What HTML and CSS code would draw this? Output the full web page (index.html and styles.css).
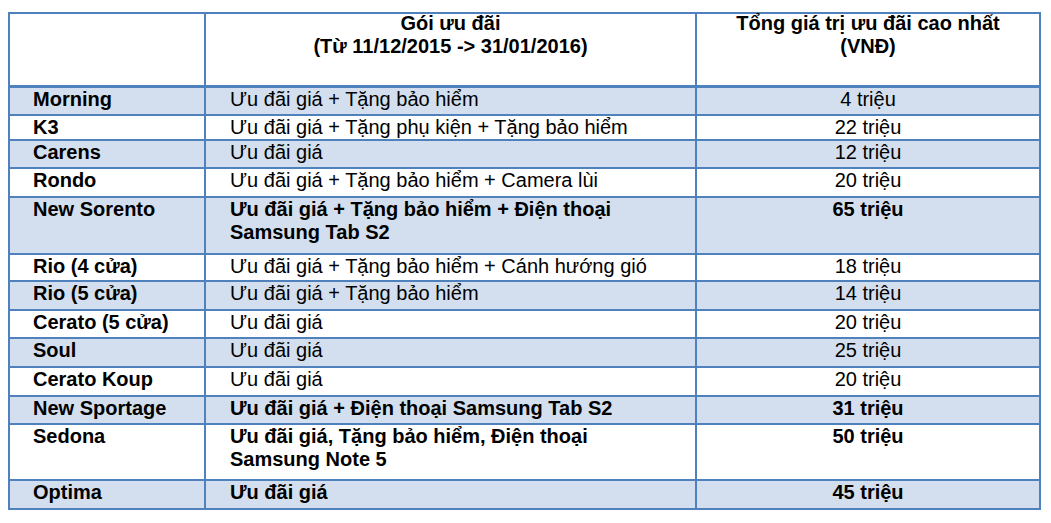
FILE: index.html
```html
<!DOCTYPE html>
<html lang="vi">
<head>
<meta charset="utf-8">
<title>Ưu đãi</title>
<link rel="stylesheet" href="styles.css">
</head>
<body>
<table class="grid">
  <colgroup>
    <col class="c1"><col class="c2"><col class="c3">
  </colgroup>
  <thead>
    <tr class="head">
      <th></th>
      <th><div class="hd">Gói ưu đãi<br>(Từ 11/12/2015 -&gt; 31/01/2016)</div></th>
      <th><div class="hd">Tổng giá trị ưu đãi cao nhất<br>(VNĐ)</div></th>
    </tr>
  </thead>
  <tbody>
    <tr class="alt h28"><td class="name">Morning</td><td class="pkg">Ưu đãi giá + Tặng bảo hiểm</td><td class="val">4 triệu</td></tr>
    <tr class="h25"><td class="name">K3</td><td class="pkg">Ưu đãi giá + Tặng phụ kiện + Tặng bảo hiểm</td><td class="val">22 triệu</td></tr>
    <tr class="alt h28"><td class="name">Carens</td><td class="pkg">Ưu đãi giá</td><td class="val">12 triệu</td></tr>
    <tr class="h29"><td class="name">Rondo</td><td class="pkg">Ưu đãi giá + Tặng bảo hiểm + Camera lùi</td><td class="val">20 triệu</td></tr>
    <tr class="alt h57 strong"><td class="name">New Sorento</td><td class="pkg">Ưu đãi giá + Tặng bảo hiểm + Điện thoại<br>Samsung Tab S2</td><td class="val">65 triệu</td></tr>
    <tr class="h27"><td class="name">Rio (4 cửa)</td><td class="pkg">Ưu đãi giá + Tặng bảo hiểm + Cánh hướng gió</td><td class="val">18 triệu</td></tr>
    <tr class="alt h29"><td class="name">Rio (5 cửa)</td><td class="pkg">Ưu đãi giá + Tặng bảo hiểm</td><td class="val">14 triệu</td></tr>
    <tr class="h28"><td class="name">Cerato (5 cửa)</td><td class="pkg">Ưu đãi giá</td><td class="val">20 triệu</td></tr>
    <tr class="alt h29"><td class="name">Soul</td><td class="pkg">Ưu đãi giá</td><td class="val">25 triệu</td></tr>
    <tr class="h29"><td class="name">Cerato Koup</td><td class="pkg">Ưu đãi giá</td><td class="val">20 triệu</td></tr>
    <tr class="alt h28 strong"><td class="name">New Sportage</td><td class="pkg">Ưu đãi giá + Điện thoại Samsung Tab S2</td><td class="val">31 triệu</td></tr>
    <tr class="h56 strong"><td class="name">Sedona</td><td class="pkg">Ưu đãi giá, Tặng bảo hiểm, Điện thoại<br>Samsung Note 5</td><td class="val">50 triệu</td></tr>
    <tr class="alt h29 strong"><td class="name">Optima</td><td class="pkg">Ưu đãi giá</td><td class="val">45 triệu</td></tr>
  </tbody>
</table>
</body>
</html>
```
FILE: styles.css
```css
html, body {
  margin: 0;
  padding: 0;
  background: #ffffff;
}
body {
  padding: 12px 0 0 8px;
  font-family: "Liberation Sans", Arial, sans-serif;
  color: #000000;
}
.grid {
  border-collapse: separate;
  border-spacing: 0;
  table-layout: fixed;
  width: 1033px;
  border-top: 2px solid #4f81bd;
  border-left: 2px solid #4f81bd;
  font-size: 20px;
  line-height: 23px;
}
.c1 { width: 196px; }
.c2 { width: 491px; }
.c3 { width: 344px; }
.grid th,
.grid td {
  box-sizing: border-box;
  padding: 0;
  vertical-align: top;
  border-right: 2px solid #4f81bd;
  border-bottom: 2px solid #4f81bd;
}
.head th {
  height: 74px;
  border-bottom-width: 3px;
  text-align: center;
  font-weight: bold;
}
.hd { margin-top: -2px; }
.alt td { background: #d3dfee; }
.grid td.name { font-weight: bold; padding-left: 23px; }
.grid td.pkg { padding-left: 24px; }
.val { text-align: center; }
.strong td { font-weight: bold; }
.h25 td { height: 25px; }
.h27 td { height: 27px; }
.h28 td { height: 28px; }
.h29 td { height: 29px; }
.h56 td { height: 56px; }
.h57 td { height: 57px; }
```
